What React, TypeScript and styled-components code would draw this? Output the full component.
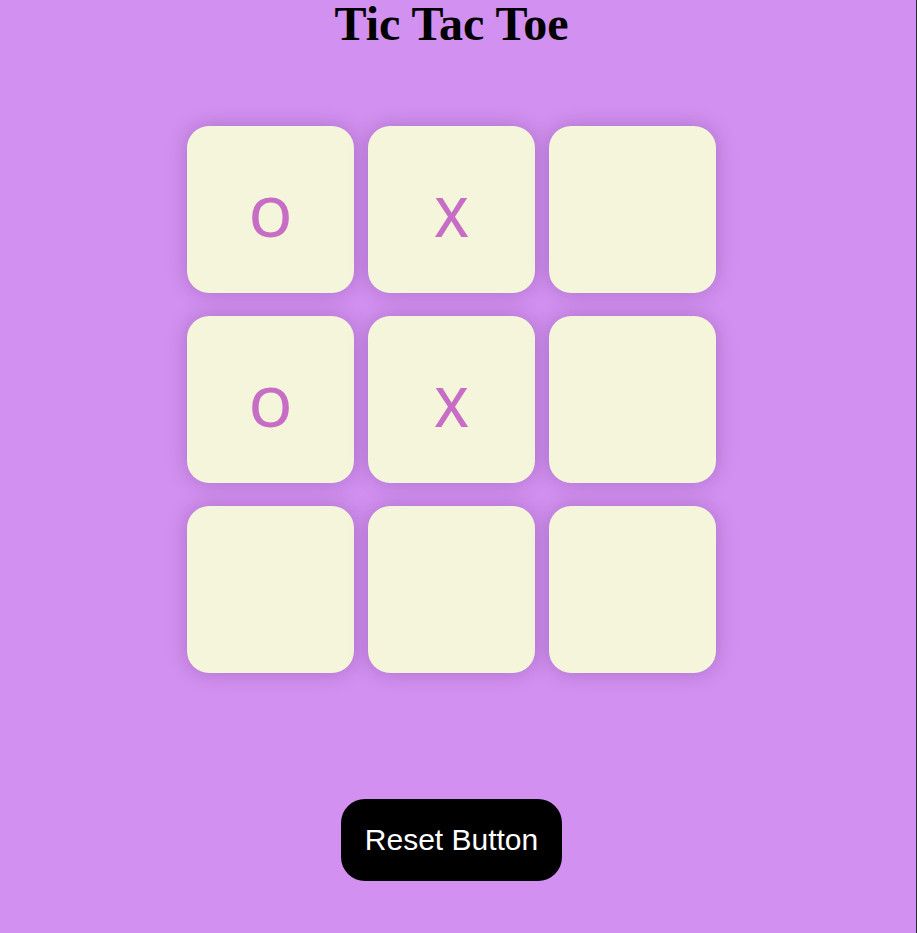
import React, { useState } from "react";
import styled, { createGlobalStyle } from "styled-components";

const Global = createGlobalStyle`
  html, body { margin: 0; padding: 0; }
  body {
    background: #d291f0;
    min-height: 933px;
    border-right: 1px solid #2a2a2a;
    box-sizing: border-box;
  }
`;

const Page = styled.main`
  display: flex;
  flex-direction: column;
  align-items: center;
  padding-right: 13px;
`;

const Title = styled.h1`
  margin: 0;
  font-family: "Liberation Serif", "Times New Roman", serif;
  font-weight: 700;
  font-size: 48px;
  line-height: 46px;
  padding-top: 1px;
  color: #000;
`;

const Board = styled.div`
  margin-top: 79px;
  display: grid;
  grid-template-columns: repeat(3, 167px);
  grid-auto-rows: 167px;
  column-gap: 14px;
  row-gap: 23px;
`;

const Cell = styled.button`
  border: none;
  padding: 0;
  border-radius: 22px;
  background: #f5f5dc;
  box-shadow: 0 0 20px rgba(80, 20, 100, 0.28);
  display: flex;
  align-items: center;
  justify-content: center;
  font-family: "Noto Sans", "Open Sans", sans-serif;
  font-weight: 500;
  font-size: 55px;
  line-height: 1;
  padding-top: 12px;
  color: #c76dc6;
  cursor: pointer;
`;

const Reset = styled.button`
  margin-top: 126px;
  width: 221px;
  height: 82px;
  border: none;
  border-radius: 24px;
  background: #000;
  color: #fff;
  font-family: "Liberation Sans", Arial, sans-serif;
  font-size: 30px;
  cursor: pointer;
`;

export default function App() {
  const [cells] = useState<string[]>(["O", "X", "", "O", "X", "", "", "", ""]);
  return (
    <>
      <Global />
      <Page>
        <Title>Tic Tac Toe</Title>
        <Board>
          {cells.map((c, i) => (
            <Cell key={i}>{c}</Cell>
          ))}
        </Board>
        <Reset>Reset Button</Reset>
      </Page>
    </>
  );
}
